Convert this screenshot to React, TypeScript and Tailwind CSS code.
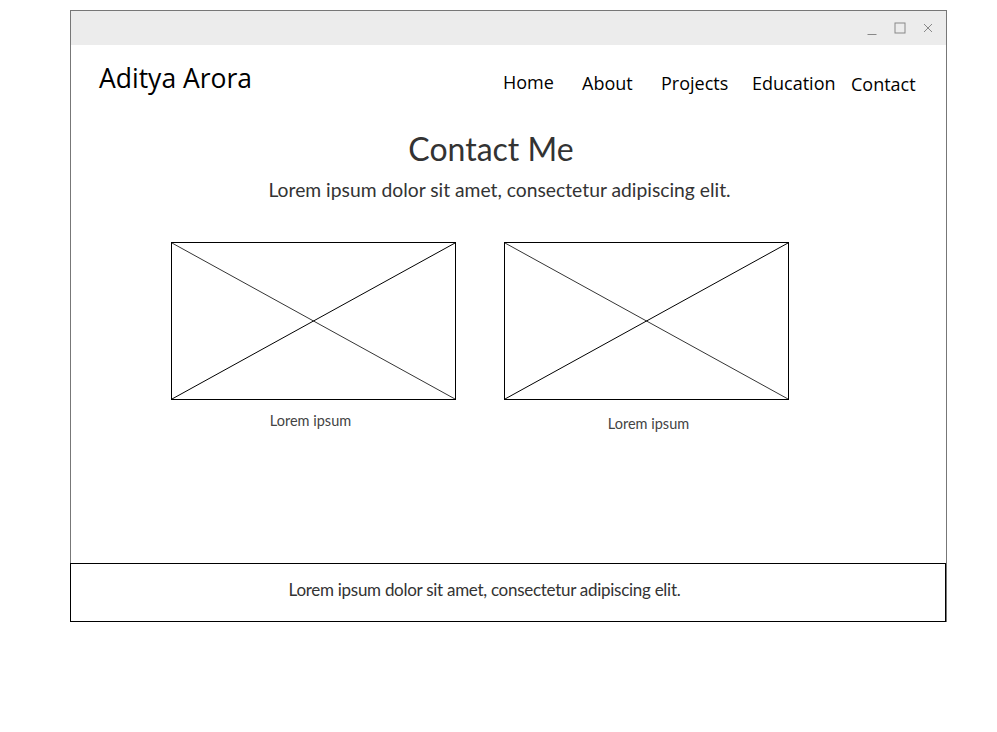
import React from "react";

const sans = { fontFamily: '"Open Sans", "Noto Sans", sans-serif' };
const src = { fontFamily: 'Lato, "Noto Sans", sans-serif' };

function XBox() {
  return (
    <div className="relative w-[285px] h-[158px] border border-black">
      <svg className="absolute inset-0" width="283" height="156" viewBox="0 0 283 156">
        <line x1="0" y1="0" x2="283" y2="156" stroke="#000" strokeWidth="0.8" />
        <line x1="0" y1="156" x2="283" y2="0" stroke="#000" strokeWidth="1" />
      </svg>
    </div>
  );
}

export default function App() {
  return (
    <div className="w-[997px] h-[732px] bg-white pt-[10px] pl-[70px]">
      <div className="w-[877px] h-[612px] border-t border-l border-r border-[#777] flex flex-col">
        <div className="h-[34px] bg-[#ececec] flex items-center justify-end pr-[13px] gap-[17px]">
          <svg width="10" height="10" viewBox="0 0 10 10" className="mt-[5px]">
            <line x1="0.5" y1="8.5" x2="9.5" y2="8.5" stroke="#888" strokeWidth="1" />
          </svg>
          <svg width="12" height="12" viewBox="0 0 12 12">
            <rect x="1" y="1" width="10" height="10" fill="none" stroke="#888" strokeWidth="1" />
          </svg>
          <svg width="10" height="10" viewBox="0 0 10 10">
            <line x1="1" y1="1" x2="9" y2="9" stroke="#888" strokeWidth="1" />
            <line x1="9" y1="1" x2="1" y2="9" stroke="#888" strokeWidth="1" />
          </svg>
        </div>
        <div className="flex-1 flex flex-col">
          <div className="flex items-start pt-[15px]" style={sans}>
            <div className="ml-[28px] text-[26.5px] leading-[36px] text-black">Aditya Arora</div>
            <div className="ml-auto flex text-[18px] leading-[26px] text-black mt-[9px]">
              <span className="w-[79px]">Home</span>
              <span className="w-[79px] mt-[1px]">About</span>
              <span className="w-[91px] mt-[1px]">Projects</span>
              <span className="w-[99px] mt-[1px]">Education</span>
              <span className="w-[95px] mt-[2px]">Contact</span>
            </div>
          </div>
          <div className="flex justify-center pr-[35px] mt-[30px]" style={src}>
            <h1 className="text-[32px] leading-[44px] text-[#333]">Contact Me</h1>
          </div>
          <div className="flex justify-center pr-[18px] mt-[6px]" style={src}>
            <p className="text-[19.3px] leading-[26px] text-[#333]">
              Lorem ipsum dolor sit amet, consectetur adipiscing elit.
            </p>
          </div>
          <div className="flex ml-[100px] mt-[39px] gap-[48px]" style={src}>
            <div className="flex flex-col items-center">
              <XBox />
              <span className="mt-[12px] pr-[6px] text-[14.5px] leading-[18px] text-[#444]">Lorem ipsum</span>
            </div>
            <div className="flex flex-col items-center">
              <XBox />
              <span className="mt-[15px] pl-[4px] text-[14.5px] leading-[18px] text-[#444]">Lorem ipsum</span>
            </div>
          </div>
        </div>
        <div className="-ml-px w-[876px] h-[59px] border border-black flex items-center justify-center pr-[47px] pb-[6px]" style={src}>
          <span className="text-[17px] text-[#333] tracking-[-0.28px]">
            Lorem ipsum dolor sit amet, consectetur adipiscing elit.
          </span>
        </div>
      </div>
    </div>
  );
}
